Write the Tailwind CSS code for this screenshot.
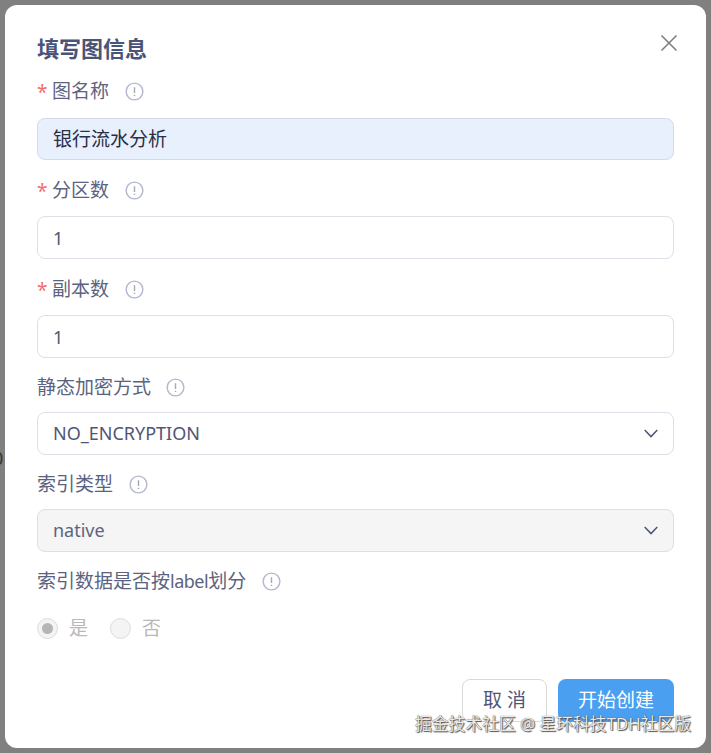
<!DOCTYPE html>
<html lang="zh">
<head>
<meta charset="utf-8">
<script src="https://cdn.jsdelivr.net/npm/@tailwindcss/browser@4"></script>
</head>
<body class="bg-[#808080] overflow-hidden font-['Noto_Sans','Noto_Sans_CJK_SC',sans-serif]">
<div class="relative w-[711px] h-[753px] p-[5px]">
  <div class="absolute left-0 top-[447px] text-[18px] leading-[22px] text-[#333] -ml-[7px]">0</div>
  <div class="relative w-[701px] h-[743px] bg-white rounded-[12px] pl-[32px] pr-[32px] pt-[28px] flex flex-col">
    <h1 class="h-[30px] leading-[30px] text-[22px] font-bold text-[#4a5478]">填写图信息</h1>
    <button class="absolute right-[28px] top-[29px] w-[18px] h-[18px] text-[#7b7b7b]">
      <svg viewBox="0 0 18 18" class="w-[18px] h-[18px]" fill="none" stroke="currentColor" stroke-width="1.5"><path d="M1.5 1.5 L16.5 16.5 M16.5 1.5 L1.5 16.5"/></svg>
    </button>

    <div class="mt-[14px] h-[28px] flex items-center text-[19px] text-[#5c6380]">
      <span class="w-[15px] text-[#f56c6c] text-[19px] pt-[3px]">*</span><span>图名称</span>
      <svg viewBox="0 0 20 20" class="ml-[16px] w-[19px] h-[19px]" fill="none" stroke="#b4b8d0" stroke-width="1.5"><circle cx="10" cy="10" r="8.8"/><path d="M10 5.5v6M10 13.4v1.4" stroke="#a9a9b5"/></svg>
    </div>
    <div class="mt-[13px] h-[42px] rounded-[8px] border border-[#d5dae6] bg-[#e8f0fe] px-[15px] flex items-center text-[19px] text-[#2a2f45]">银行流水分析</div>

    <div class="mt-[16px] h-[28px] flex items-center text-[19px] text-[#5c6380]">
      <span class="w-[15px] text-[#f56c6c] text-[19px] pt-[3px]">*</span><span>分区数</span>
      <svg viewBox="0 0 20 20" class="ml-[16px] w-[19px] h-[19px]" fill="none" stroke="#b4b8d0" stroke-width="1.5"><circle cx="10" cy="10" r="8.8"/><path d="M10 5.5v6M10 13.4v1.4" stroke="#a9a9b5"/></svg>
    </div>
    <div class="mt-[12px] h-[43px] rounded-[8px] border border-[#dcdfe6] bg-white px-[15px] pt-[1px] flex items-center text-[18px] text-[#4f5675]">1</div>

    <div class="mt-[16px] h-[28px] flex items-center text-[19px] text-[#5c6380]">
      <span class="w-[15px] text-[#f56c6c] text-[19px] pt-[3px]">*</span><span>副本数</span>
      <svg viewBox="0 0 20 20" class="ml-[16px] w-[19px] h-[19px]" fill="none" stroke="#b4b8d0" stroke-width="1.5"><circle cx="10" cy="10" r="8.8"/><path d="M10 5.5v6M10 13.4v1.4" stroke="#a9a9b5"/></svg>
    </div>
    <div class="mt-[12px] h-[43px] rounded-[8px] border border-[#dcdfe6] bg-white px-[15px] pt-[1px] flex items-center text-[18px] text-[#4f5675]">1</div>

    <div class="mt-[15px] h-[28px] flex items-center text-[19px] text-[#5c6380]">
      <span>静态加密方式</span>
      <svg viewBox="0 0 20 20" class="ml-[15px] w-[19px] h-[19px]" fill="none" stroke="#b4b8d0" stroke-width="1.5"><circle cx="10" cy="10" r="8.8"/><path d="M10 5.5v6M10 13.4v1.4" stroke="#a9a9b5"/></svg>
    </div>
    <div class="mt-[11px] h-[43px] rounded-[8px] border border-[#dcdfe6] bg-white pl-[15px] pr-[15px] flex items-center justify-between text-[18px] text-[#4f5675]">
      <span>NO_ENCRYPTION</span>
      <svg viewBox="0 0 14 9" class="w-[14px] h-[9px]" fill="none" stroke="#4f5675" stroke-width="1.5"><path d="M.7 1 L7 7.6 L13.3 1"/></svg>
    </div>

    <div class="mt-[15px] h-[28px] flex items-center text-[19px] text-[#5c6380]">
      <span>索引类型</span>
      <svg viewBox="0 0 20 20" class="ml-[16px] w-[19px] h-[19px]" fill="none" stroke="#b4b8d0" stroke-width="1.5"><circle cx="10" cy="10" r="8.8"/><path d="M10 5.5v6M10 13.4v1.4" stroke="#a9a9b5"/></svg>
    </div>
    <div class="mt-[11px] h-[43px] rounded-[8px] border border-[#dcdfe6] bg-[#f5f5f6] pl-[15px] pr-[15px] flex items-center justify-between text-[18px] text-[#5c6380]">
      <span>native</span>
      <svg viewBox="0 0 14 9" class="w-[14px] h-[9px]" fill="none" stroke="#4f5675" stroke-width="1.5"><path d="M.7 1 L7 7.6 L13.3 1"/></svg>
    </div>

    <div class="mt-[15px] h-[28px] flex items-center text-[19px] text-[#5c6380]">
      <span>索引数据是否按<span class="text-[18px] tracking-[-0.5px]">label</span>划分</span>
      <svg viewBox="0 0 20 20" class="ml-[16px] w-[19px] h-[19px]" fill="none" stroke="#b4b8d0" stroke-width="1.5"><circle cx="10" cy="10" r="8.8"/><path d="M10 5.5v6M10 13.4v1.4" stroke="#a9a9b5"/></svg>
    </div>

    <div class="mt-[22px] h-[22px] flex items-center text-[19px] text-[#b9b9b9]">
      <span class="w-[21px] h-[21px] rounded-full border border-[#dcdcdc] bg-[#f4f4f4] flex items-center justify-center"><span class="w-[11px] h-[11px] rounded-full bg-[#b5b5b5]"></span></span>
      <span class="ml-[11px]">是</span>
      <span class="ml-[22px] w-[21px] h-[21px] rounded-full border border-[#dcdcdc] bg-[#f4f4f4]"></span>
      <span class="ml-[11px]">否</span>
    </div>

    <div class="mt-[40px] flex justify-end gap-[11px] text-[19px]">
      <button class="w-[85px] h-[43px] rounded-[8px] border border-[#d9d9d9] bg-white text-[#4f5675]">取 消</button>
      <button class="w-[116px] h-[43px] rounded-[8px] bg-[#4a9ff0] text-white">开始创建</button>
    </div>
  </div>
  <div class="absolute left-[415px] top-[713px] text-[16.8px] leading-[22px] text-[#e9e9e9] whitespace-nowrap [text-shadow:0_0_1px_#333,1px_1px_1px_#555]">掘金技术社区 @ 星环科技TDH社区版</div>
</div>
</body>
</html>
